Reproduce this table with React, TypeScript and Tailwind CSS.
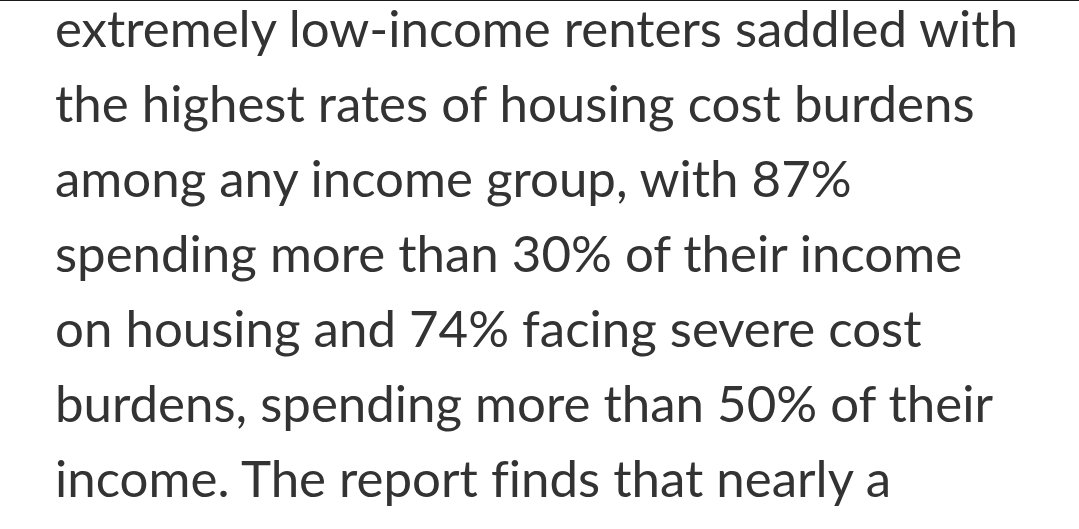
export default function App() {
  const lines = [
    'extremely low-income renters saddled with',
    'the highest rates of housing cost burdens',
    'among any income group, with 87%',
    'spending more than 30% of their income',
    'on housing and 74% facing severe cost',
    'burdens, spending more than 50% of their',
    'income. The report finds that nearly a',
  ];
  return (
    <div className="w-[1079px] h-[529px] bg-white overflow-hidden border-t border-[#1a1a1a]">
      <div className="pl-[55px] text-[51px] leading-[75px] text-[#333333] font-['Lato',sans-serif] [font-variant-ligatures:none]">
        {lines.map((l, i) => (
          <div key={l} className={i === 0 ? 'whitespace-nowrap leading-[53px] mb-[11px]' : 'whitespace-nowrap'}>{l}</div>
        ))}
      </div>
    </div>
  );
}
